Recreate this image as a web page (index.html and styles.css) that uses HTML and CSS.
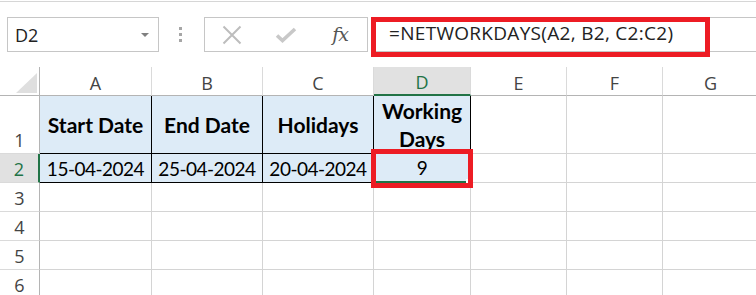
FILE: index.html
```html
<!DOCTYPE html>
<html lang="en">

<head>
    <meta charset="UTF-8">
    <meta name="viewport" content="width=device-width, initial-scale=1.0">
    <title>NETWORKDAYS</title>
    <link rel="stylesheet" href="styles.css">
</head>

<body>

    <div class="excel">
        <div class="top-line"></div>

        <div class="toolbar">
            <div class="name-box">
                <span>D2</span>
                <span class="caret"></span>
            </div>
            <div class="grip"><i></i><i></i><i></i></div>
            <div class="formula-buttons">
                <span class="fbtn">
                    <svg width="20" height="20" viewBox="0 0 20 20">
                        <path d="M1.5 1.5 L18.5 18.5 M18.5 1.5 L1.5 18.5" stroke="#bdbdbd" stroke-width="2" fill="none" />
                    </svg>
                </span>
                <span class="fbtn">
                    <svg width="22" height="16" viewBox="0 0 22 16">
                        <path d="M2 8.5 L7.5 13.5 L20 2" stroke="#c8c8c8" stroke-width="3.6" fill="none" />
                    </svg>
                </span>
                <span class="fbtn fx">fx</span>
            </div>
            <div class="formula">
                <span class="formula-text">=NETWORKDAYS(A2, B2, C2:C2)</span>
                <div class="mark"></div>
            </div>
        </div>

        <div class="sheet">
            <!-- column headers -->
            <div class="corner"><div class="triangle"></div></div>
            <div class="col-head">A</div>
            <div class="col-head">B</div>
            <div class="col-head">C</div>
            <div class="col-head active">D</div>
            <div class="col-head">E</div>
            <div class="col-head">F</div>
            <div class="col-head">G</div>
            <div class="col-head"></div>

            <!-- row 1 -->
            <div class="row-head">1</div>
            <div class="cell data bold">Start Date</div>
            <div class="cell data bold">End Date</div>
            <div class="cell data bold">Holidays</div>
            <div class="cell data bold">Working Days</div>
            <div class="cell"></div>
            <div class="cell"></div>
            <div class="cell"></div>
            <div class="cell"></div>

            <!-- row 2 -->
            <div class="row-head active">2</div>
            <div class="cell data">15-04-2024</div>
            <div class="cell data">25-04-2024</div>
            <div class="cell data">20-04-2024</div>
            <div class="cell data selected">9<span class="handle"></span><span class="mark-cell"></span></div>
            <div class="cell"></div>
            <div class="cell"></div>
            <div class="cell"></div>
            <div class="cell"></div>

            <div class="row-head">3</div>
            <div class="cell"></div><div class="cell"></div><div class="cell"></div><div class="cell"></div><div class="cell"></div><div class="cell"></div><div class="cell"></div><div class="cell"></div>

            <div class="row-head">4</div>
            <div class="cell"></div><div class="cell"></div><div class="cell"></div><div class="cell"></div><div class="cell"></div><div class="cell"></div><div class="cell"></div><div class="cell"></div>

            <div class="row-head">5</div>
            <div class="cell"></div><div class="cell"></div><div class="cell"></div><div class="cell"></div><div class="cell"></div><div class="cell"></div><div class="cell"></div><div class="cell"></div>

            <div class="row-head">6</div>
            <div class="cell"></div><div class="cell"></div><div class="cell"></div><div class="cell"></div><div class="cell"></div><div class="cell"></div><div class="cell"></div><div class="cell"></div>
        </div>
    </div>

</body>

</html>
```

FILE: styles.css
```css
body {
    margin: 0;
    background: #fff;
    font-family: "Open Sans", sans-serif;
}

.excel {
    width: 756px;
    height: 295px;
    overflow: hidden;
}

.top-line {
    margin-top: 1px;
    border-top: 1px solid #d6d6d6;
}

/* formula bar */
.toolbar {
    display: flex;
    height: 35px;
    margin-top: 15px;
}

.name-box {
    margin-left: 7px;
    width: 152px;
    box-sizing: border-box;
    border: 1px solid #c6c6c6;
    display: flex;
    align-items: center;
    justify-content: space-between;
    padding: 0 9px 0 7px;
    font-size: 18px;
    color: #222;
}

.caret {
    width: 0;
    height: 0;
    border-left: 4px solid transparent;
    border-right: 4px solid transparent;
    border-top: 4px solid #808080;
}

.grip {
    width: 3px;
    margin: 0 22px 0 20px;
    display: flex;
    flex-direction: column;
    justify-content: center;
    gap: 3px;
}

.grip i {
    display: block;
    width: 3px;
    height: 3px;
    background: #a6a6a6;
}

.formula-buttons {
    width: 164px;
    box-sizing: border-box;
    border: 1px solid #c6c6c6;
    display: flex;
    align-items: center;
}

.fbtn {
    width: 54px;
    display: flex;
    justify-content: center;
    align-items: center;
}

.fx {
    font-family: "DejaVu Serif", serif;
    font-style: italic;
    font-size: 19px;
    color: #555;
    letter-spacing: -1px;
    padding-bottom: 1px;
}

.formula {
    flex: 1;
    margin-left: 3px;
    position: relative;
    border-top: 1px solid #c6c6c6;
    border-bottom: 1px solid #c6c6c6;
    padding-left: 18px;
    display: flex;
    align-items: center;
}

.formula-text {
    font-size: 19px;
    letter-spacing: 0.3px;
    color: #222;
    padding-bottom: 4px;
}

.mark {
    position: absolute;
    left: 0;
    top: -1px;
    width: 339px;
    height: 40px;
    box-sizing: border-box;
    border: 5px solid #ed1c24;
}

/* grid */
.sheet {
    margin-top: 15px;
    display: grid;
    grid-template-columns: 40px 112px 111px 111px 97px 96px 96px 96px 60px;
    grid-template-rows: 29px 58px 29px 29px 29px 29px 29px;
}

.sheet > div {
    box-sizing: border-box;
}

.corner {
    border-right: 1px solid #b4b4b4;
    border-bottom: 1px solid #b4b4b4;
    display: flex;
    justify-content: flex-end;
    align-items: flex-end;
    padding: 0 2px 2px 0;
}

.triangle {
    width: 21px;
    height: 20px;
    background: #dfdfdf;
    clip-path: polygon(100% 0, 100% 100%, 0 100%);
}

.col-head {
    border-right: 1px solid #dadada;
    border-bottom: 1px solid #b4b4b4;
    display: flex;
    justify-content: center;
    align-items: center;
    padding-top: 3px;
    font-size: 18px;
    color: #444;
}

.col-head.active {
    background: #e1e1e1;
    color: #217346;
    border-bottom: 2px solid #217346;
}

.row-head {
    border-right: 1px solid #b4b4b4;
    border-bottom: 1px solid #dadada;
    display: flex;
    justify-content: center;
    align-items: flex-end;
    padding-bottom: 4px;
    font-size: 18px;
    line-height: 18px;
    color: #444;
}

.row-head.active {
    background: #e1e1e1;
    color: #217346;
    border-right: 2px solid #217346;
}

.cell {
    border-right: 1px solid #d4d4d4;
    border-bottom: 1px solid #d4d4d4;
}

.data {
    background: #ddebf7;
    border-right-color: #000;
    border-bottom-color: #000;
    display: flex;
    align-items: center;
    justify-content: center;
    text-align: center;
    font-family: Lato, sans-serif;
    font-size: 19px;
    letter-spacing: -0.5px;
    line-height: 28px;
    color: #000;
    padding-top: 1px;
}

.bold {
    font-weight: bold;
    font-size: 21px;
    letter-spacing: 0;
}

.selected {
    position: relative;
    border-bottom: 2px solid #217346;
}

.handle {
    position: absolute;
    right: 1px;
    bottom: -2px;
    width: 3px;
    height: 4px;
    background: #fff;
}

.mark-cell {
    position: absolute;
    left: -3px;
    right: -3px;
    top: -5px;
    bottom: -7px;
    border: 5px solid #ed1c24;
}
```
